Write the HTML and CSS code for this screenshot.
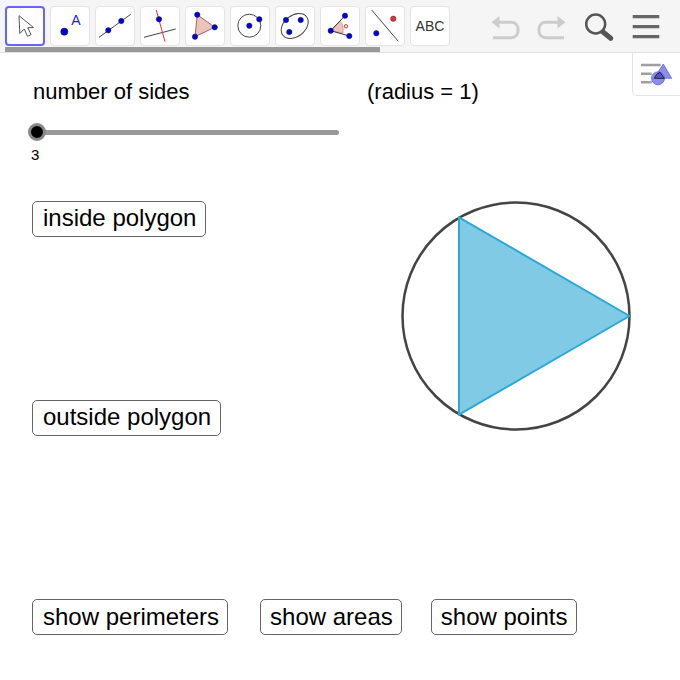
FILE: index.html
```html
<!DOCTYPE html>
<html lang="en">
<head>
<meta charset="utf-8">
<title>Polygons in a circle</title>
<link rel="stylesheet" href="styles.css">
</head>
<body>
<header class="toolbar">
  <div class="tools">
    <div class="tool tool-active"><svg viewBox="0 0 40 40"><path d="M14 9.700 14.800 27.500 19.300 23 22.500 30.300 26 28.700 22.800 21.700 28.500 21.500z" fill="#fff" stroke="#555" stroke-width="1" stroke-linejoin="round"/></svg></div>
    <div class="tool"><svg viewBox="0 0 40 40"><circle cx="14.300" cy="25.700" r="3.600" fill="#0000e0" stroke="#223" stroke-width=".6"/><text x="26" y="19" class="icon-a">A</text></svg></div>
    <div class="tool"><svg viewBox="0 0 40 40"><path d="M4 31.300 35.700 8.300" stroke="#444" fill="none"/><circle cx="13.300" cy="24.300" r="2.700" class="pt"/><circle cx="26.300" cy="15" r="2.700" class="pt"/></svg></div>
    <div class="tool"><svg viewBox="0 0 40 40"><path d="M4 31.300 35.700 23" stroke="#444" fill="none"/><path d="M16.300 4 25 35.700" stroke="#e83030" fill="none"/><circle cx="19" cy="13.300" r="2.700" class="pt"/></svg></div>
    <div class="tool"><svg viewBox="0 0 40 40"><path d="M12.300 8.700 29.700 21.300 10 30.700z" fill="#ecc4bc" stroke="#8f6a66"/><circle cx="12.300" cy="8.700" r="2.700" class="pt"/><circle cx="29.700" cy="21.300" r="2.700" class="pt"/><circle cx="10" cy="30.700" r="2.700" class="pt"/></svg></div>
    <div class="tool"><svg viewBox="0 0 40 40"><circle cx="19.300" cy="19.700" r="11.500" fill="none" stroke="#444"/><circle cx="19.300" cy="19.700" r="2.700" class="pt"/><circle cx="29.300" cy="13.300" r="2.700" class="pt"/></svg></div>
    <div class="tool"><svg viewBox="0 0 40 40"><ellipse cx="19.700" cy="20" rx="15" ry="10.500" transform="rotate(-38 19.700 20)" fill="none" stroke="#444"/><circle cx="11" cy="14" r="2.700" class="pt"/><circle cx="25.700" cy="14" r="2.700" class="pt"/><circle cx="14.300" cy="26" r="2.700" class="pt"/></svg></div>
    <div class="tool"><svg viewBox="0 0 40 40"><path d="M10.700 24.700 20 15.200C22.500 17.500 23.500 20.500 23 27z" fill="#ecc4bc" stroke="#d87060" stroke-width=".6"/><path d="M25 9.700 10.700 24.700 29.300 30" stroke="#333" fill="none"/><circle cx="25" cy="9.700" r="2.700" class="pt"/><circle cx="10.700" cy="24.700" r="2.700" class="pt"/><circle cx="29.300" cy="30" r="2.700" class="pt"/><circle cx="26" cy="20.300" r="1.700" fill="none" stroke="#e83030"/></svg></div>
    <div class="tool"><svg viewBox="0 0 40 40"><path d="M6.700 4 33.300 35.300" stroke="#444" fill="none"/><circle cx="11.300" cy="27.300" r="2.700" class="pt"/><circle cx="28.300" cy="12.700" r="2.700" fill="#e83030" stroke="#333" stroke-width=".5"/></svg></div>
    <div class="tool tool-text">ABC</div>
  </div>
  <div class="actions">
    <svg class="action" viewBox="0 0 30 40"><path d="M1.500 16.300 9.500 10V22.600z" fill="#ccc"/><path d="M7 16.300H21.500A6.500 6.500 0 0 1 28 22.800V25.200A6.500 6.500 0 0 1 21.500 31.700H3" class="faded"/></svg>
    <svg class="action" viewBox="0 0 30 40"><path d="M28.500 16.300 20.500 10V22.600z" fill="#ccc"/><path d="M23 16.300H8.500A6.500 6.500 0 0 0 2 22.800V25.200A6.500 6.500 0 0 0 8.500 31.700H27" class="faded"/></svg>
    <svg class="action" viewBox="0 0 30 40"><circle cx="11.700" cy="18" r="9.500" fill="none" stroke="#555" stroke-width="2.500"/><path d="M19 26 26.700 32.300" stroke="#555" stroke-width="5" stroke-linecap="round"/></svg>
    <svg class="action" viewBox="0 0 30 40"><path d="M1.700 10.700H28.300M1.700 20.700H28.300M1.700 30.700H28.300" stroke="#666" stroke-width="3.200"/></svg>
  </div>
  <div class="scrollbar"></div>
</header>
<div class="style-tab">
  <svg viewBox="0 0 48 43" class="style-icon"><path d="M9 12H28.700M9 20.700H19.700M9 29.300H19.700" stroke="#a0a0a0" stroke-width="2.500"/><path d="M31.300 11 39.700 25.300H22z" fill="#8c8cf0" stroke="#6a6ac8" stroke-width=".8"/><circle cx="26" cy="25.300" r="6.500" fill="#8c8cf0" stroke="#6a6ac8" stroke-width=".8"/><path d="M28 19.300 32.300 25.300H22.300Q24 20.500 28 19.300z" fill="#5555c8" stroke="#223" stroke-width="1"/></svg>
</div>
<main class="canvas">
  <div class="top">
    <section class="left">
      <p class="label">number of sides</p>
      <div class="slider"><span class="track"></span><span class="knob"></span></div>
      <p class="value">3</p>
      <button class="btn btn-inside">inside polygon</button>
      <button class="btn btn-outside">outside polygon</button>
    </section>
    <section class="right">
      <p class="label">(radius = 1)</p>
      <svg class="figure" viewBox="0 0 240 240"><circle cx="119" cy="119" r="113.500" fill="#fff" stroke="#444" stroke-width="2.500"/><path d="M232.500 119 62 20.300V217.700z" fill="#80cae6" stroke="#2ba8d6" stroke-width="2" stroke-linejoin="round"/></svg>
    </section>
  </div>
  <div class="bottom">
    <button class="btn">show perimeters</button>
    <button class="btn btn-areas">show areas</button>
    <button class="btn btn-points">show points</button>
  </div>
</main>
</body>
</html>
```
FILE: styles.css
```css
* { box-sizing: border-box; }
html, body { margin: 0; padding: 0; }
body {
  width: 680px;
  height: 680px;
  overflow: hidden;
  position: relative;
  background: #fff;
  color: #000;
  font-family: "Liberation Sans", Arial, sans-serif;
}
.toolbar {
  position: relative;
  height: 53px;
  padding: 6px 0 0 5px;
  display: flex;
  background: #f5f5f5;
  border-bottom: 1px solid #e0e0e0;
}
.tools { display: flex; gap: 5px; }
.tool {
  width: 40px;
  height: 40px;
  background: #fff;
  border: 1px solid #e4e4e4;
  border-radius: 4px;
  overflow: hidden;
}
.tool svg { display: block; width: 40px; height: 40px; margin: -1px; }
.tool-active { border: 2px solid #6464ff; }
.tool-active svg { margin: -2px; }
.tool-text {
  display: flex;
  align-items: center;
  justify-content: center;
  font-size: 14px;
  color: #333;
}
.pt { fill: #0000e0; stroke: #223; stroke-width: .5; }
.icon-a { font-size: 14px; fill: #1a1aee; text-anchor: middle; font-family: "Liberation Sans", Arial, sans-serif; }
.faded { fill: none; stroke: #ccc; stroke-width: 3; stroke-linejoin: round; }
.actions { display: flex; gap: 17px; margin-left: 40px; }
.action { display: block; width: 30px; height: 40px; }
.scrollbar {
  position: absolute;
  left: 5px;
  top: 47px;
  width: 375px;
  height: 5px;
  background: #999;
}
.style-tab {
  position: absolute;
  right: 0;
  top: 53px;
  width: 48px;
  height: 43px;
  background: #fff;
  border-left: 1px solid #e4e4e4;
  border-bottom: 1px solid #e4e4e4;
  border-bottom-left-radius: 5px;
}
.style-icon { display: block; width: 48px; height: 43px; margin-left: -1px; }
.canvas { padding: 25px 0 0 32px; }
.top { display: flex; height: 521px; }
.left { width: 335px; display: flex; flex-direction: column; align-items: flex-start; }
.right { flex: 1; }
.label {
  margin: 0 0 0 1px;
  font-size: 22px;
  line-height: 28px;
}
.right .label { margin-left: 0; }
.slider { position: relative; width: 307px; height: 18px; margin-top: 17px; }
.track {
  display: block;
  position: absolute;
  left: 5px;
  right: 0;
  top: 6.500px;
  height: 5px;
  border-radius: 3px;
  background: #999;
}
.knob {
  position: absolute;
  left: -4px;
  top: 0;
  width: 18px;
  height: 18px;
  border-radius: 50%;
  background: #000;
  border: 3px solid #888;
}
.value { margin: 5px 0 0 -1px; font-size: 15px; line-height: 18px; }
.btn {
  display: block;
  height: 36px;
  padding: 0 8px 1px 10px;
  background: #fff;
  border: 1px solid #666;
  border-radius: 5px;
  font-family: inherit;
  font-size: 24px;
  color: #000;
  white-space: nowrap;
}
.btn-inside { margin-top: 37px; padding: 0 9px 3px 10px; }
.btn-outside { margin-top: 163px; padding: 0 9px 3px 10px; }
.figure { display: block; width: 240px; height: 240px; margin-top: 91px; margin-left: 30px; }
.bottom { display: flex; }
.btn-areas { margin-left: 32px; padding-left: 9px; }
.btn-points { margin-left: 29px; padding-left: 9px; }
```
